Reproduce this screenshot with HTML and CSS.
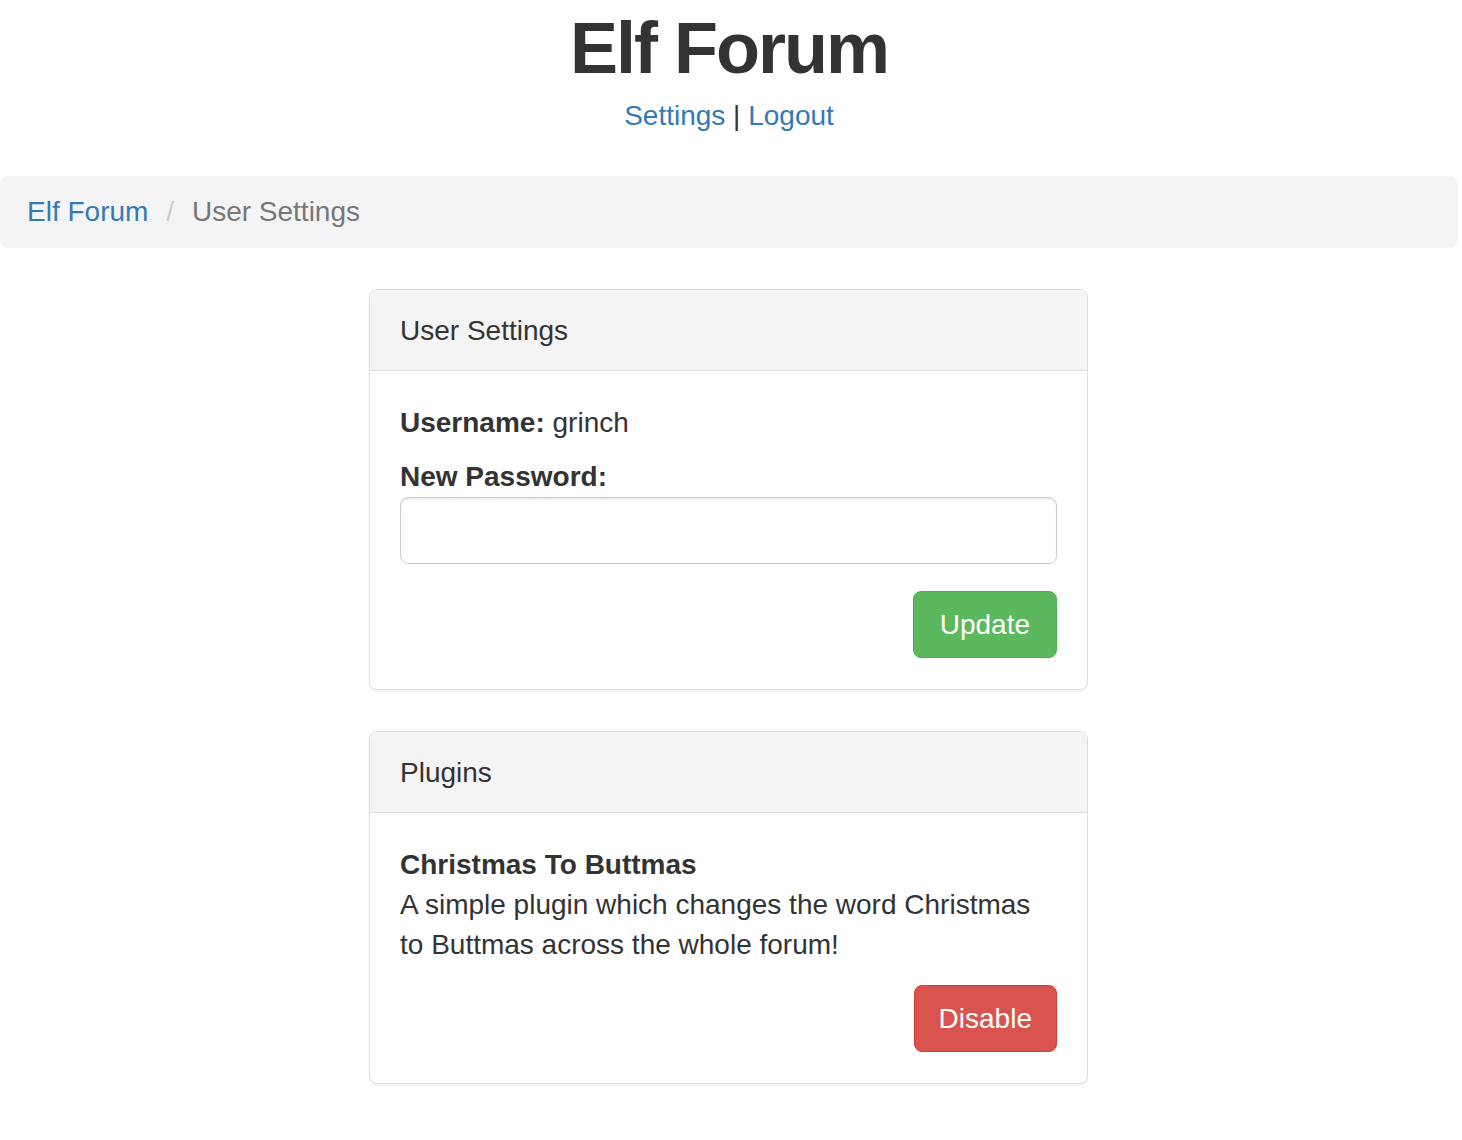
FILE: index.html
```html
<!DOCTYPE html>
<html lang="en">
<head>
<meta charset="utf-8">
<title>Elf Forum - User Settings</title>
<link rel="stylesheet" href="styles.css">
</head>
<body>
<div class="page">
  <header class="site-header">
    <h1 class="site-title">Elf Forum</h1>
    <nav class="user-nav"><a href="#">Settings</a> | <a href="#">Logout</a></nav>
  </header>
  <ol class="breadcrumb">
    <li><a href="#">Elf Forum</a></li>
    <li class="active">User Settings</li>
  </ol>
  <main class="content">
    <section class="panel">
      <div class="panel-heading">User Settings</div>
      <div class="panel-body">
        <p class="username"><b>Username:</b> grinch</p>
        <form class="settings-form">
          <label class="field-label" for="pw">New Password:</label>
          <input class="form-control" id="pw" type="password">
          <div class="actions">
            <button type="button" class="btn btn-success">Update</button>
          </div>
        </form>
      </div>
    </section>
    <section class="panel">
      <div class="panel-heading">Plugins</div>
      <div class="panel-body">
        <div class="plugin-name">Christmas To Buttmas</div>
        <p class="plugin-desc">A simple plugin which changes the word Christmas to Buttmas across the whole forum!</p>
        <div class="actions actions-plugin">
          <button type="button" class="btn btn-danger">Disable</button>
        </div>
      </div>
    </section>
  </main>
</div>
</body>
</html>
```
FILE: styles.css
```css
* { box-sizing: border-box; }
html, body { margin: 0; padding: 0; background: #fff; }
body {
  font-family: "Liberation Sans", Arial, Helvetica, sans-serif;
  font-size: 28px;
  line-height: 40px;
  color: #333;
}
a { color: #337ab7; text-decoration: none; }

.page { margin-right: 4px; }

.site-header { text-align: center; padding-top: 9px; }
.site-title {
  margin: 0;
  font-size: 72px;
  line-height: 79px;
  font-weight: 700;
  letter-spacing: -2px;
}
.user-nav { margin-top: 8px; height: 40px; }

.breadcrumb {
  list-style: none;
  margin: 40px 0 41px;
  padding: 16px 27px;
  background: #f4f4f4;
  border-radius: 8px;
  display: flex;
}
.breadcrumb li + li { margin-left: 8px; }
.breadcrumb li + li::before {
  content: "/\00a0";
  padding: 0 10px;
  color: #ccc;
}
.breadcrumb .active { color: #777; }

.content {
  display: flex;
  flex-direction: column;
  align-items: center;
  padding-right: 1px;
}

.panel {
  width: 719px;
  background: #fff;
  border: 1px solid #ddd;
  border-radius: 8px;
  box-shadow: 0 2px 2px rgba(0, 0, 0, 0.05);
  margin-bottom: 41px;
}
.panel-heading {
  padding: 21px 30px 19px;
  background: #f4f4f4;
  border-bottom: 1px solid #ddd;
  border-radius: 7px 7px 0 0;
}
.panel-body { padding: 32px 30px 31px; }

.username { margin: 0 0 14px; }
.settings-form { margin: 0; }
.field-label { display: block; font-weight: 700; margin-bottom: 0; }
.form-control {
  display: block;
  width: 100%;
  height: 67px;
  margin: 0;
  padding: 12px 24px;
  font: inherit;
  border: 1px solid #ccc;
  border-radius: 8px;
  box-shadow: inset 0 2px 2px rgba(0, 0, 0, 0.075);
  background: #fff;
}
.actions { display: flex; justify-content: flex-end; margin-top: 27px; }
.actions-plugin { margin-top: 20px; }

.plugin-name { font-weight: 700; }
.plugin-desc { margin: 0; }

.btn {
  font: inherit;
  height: 67px;
  padding: 0 26px;
  color: #fff;
  border: 1px solid transparent;
  border-radius: 8px;
  cursor: pointer;
}
.btn-success { background: #5cb85c; border-color: #4cae4c; }
.btn-danger { background: #d9534f; border-color: #d43f3a; padding: 0 24px; }
```
